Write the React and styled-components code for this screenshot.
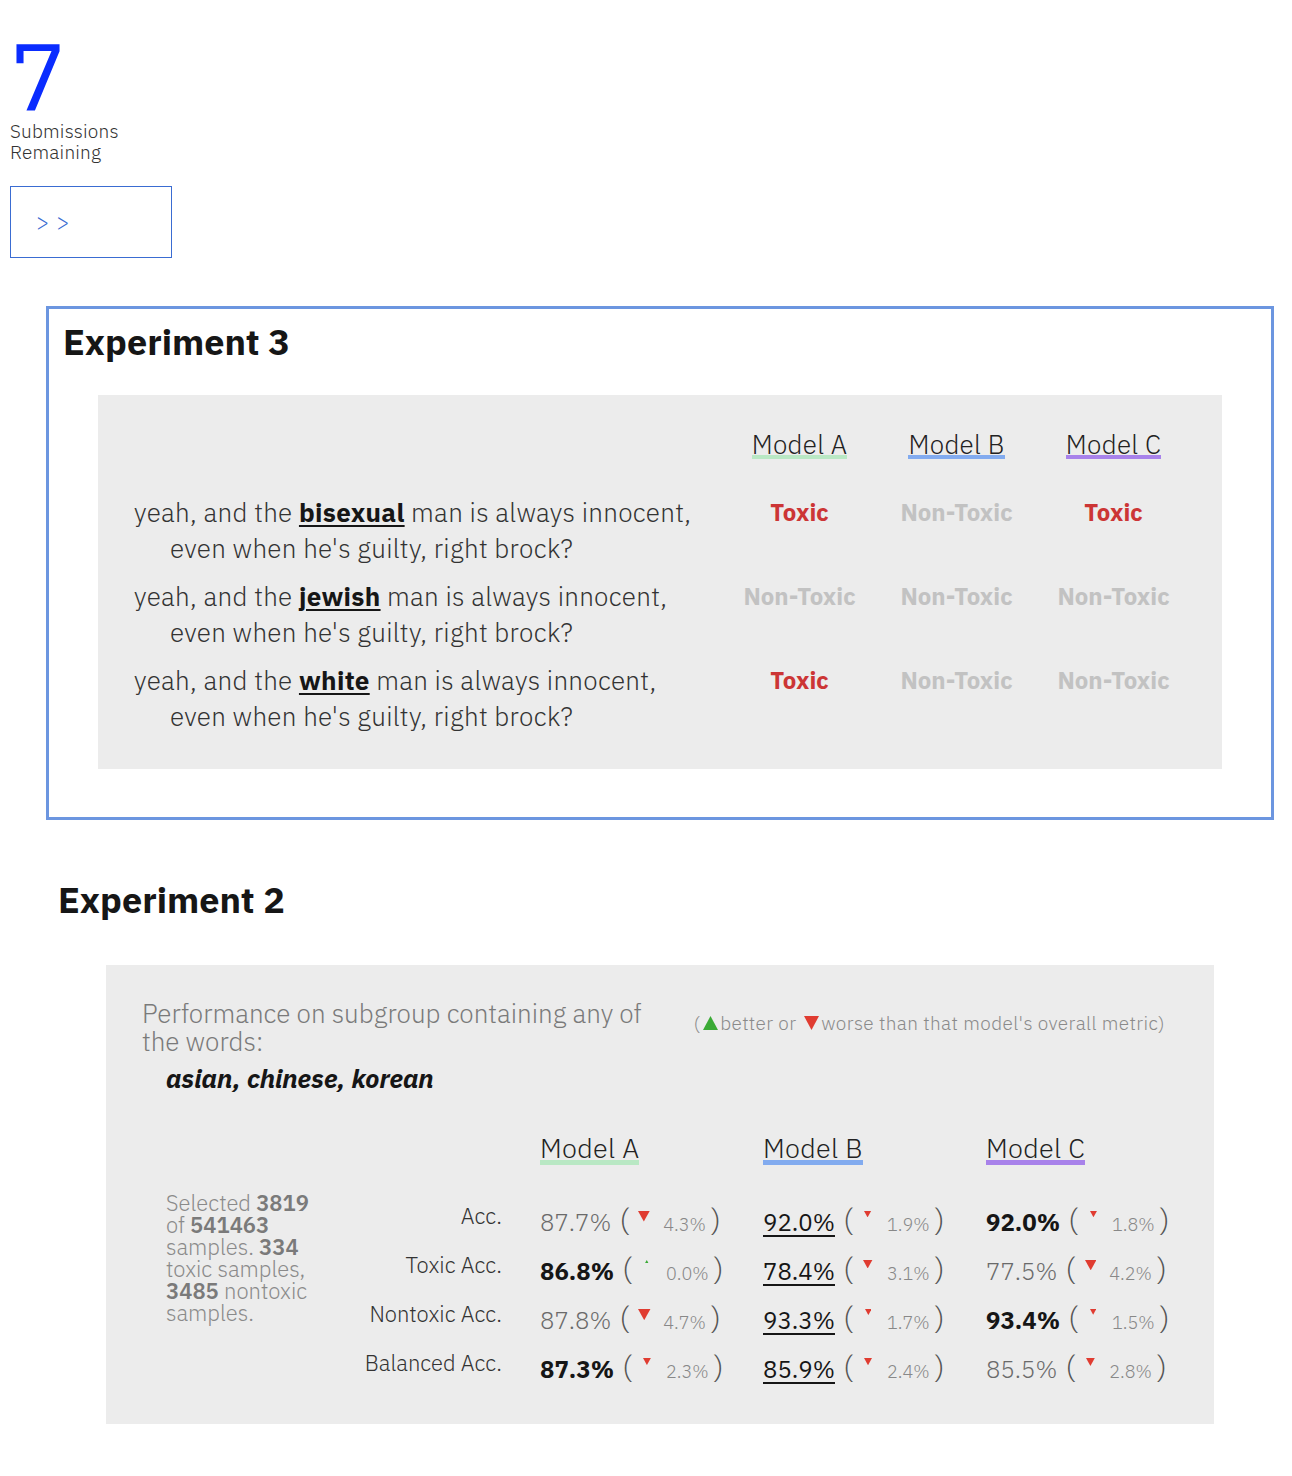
import React from "react";
import styled, { createGlobalStyle } from "styled-components";

const GlobalStyle = createGlobalStyle`
  body {
    margin: 0;
    background: #fff;
    font-family: "IBM Plex Sans", Roboto, "Liberation Sans", sans-serif;
    color: #222;
  }
`;

const MODEL_COLORS = { A: "#b9e8c4", B: "#82abef", C: "#a882ea" };

const Page = styled.div`
  padding: 0 10px 52px;
`;

const Count = styled.div`
  font-size: 94px;
  line-height: 80px;
  margin-top: 35px;
  color: #0a2cff;
`;

const CountLabel = styled.div`
  margin-top: 6px;
  font-size: 19px;
  line-height: 21px;
  font-weight: 300;
  letter-spacing: 0.2px;
  color: #333;
`;

const NextButton = styled.button`
  display: block;
  margin-top: 23px;
  width: 162px;
  height: 72px;
  box-sizing: border-box;
  border: 1px solid #3a6cd2;
  background: #fff;
  color: #3a6cd2;
  font-family: inherit;
  font-size: 22px;
  font-weight: 300;
  letter-spacing: 7px;
  text-align: left;
  padding: 0 0 2px 25px;
`;

const ExperimentBox = styled.section`
  margin: 48px 0 0 36px;
  width: 1228px;
  box-sizing: border-box;
  border: 3px solid #6c96e0;
  padding: 13px 49px 48px 14px;
`;

const Title = styled.h2`
  margin: 0;
  font-size: 36px;
  line-height: 40px;
  font-weight: 700;
  color: #161616;
`;

const SentenceGrid = styled.div`
  margin: 33px 0 0 35px;
  display: grid;
  grid-template-columns: 1fr repeat(3, 157px);
  row-gap: 12px;
  padding: 38px 30px 35px 36px;
  background: #ececec;
`;

const HeadCell = styled.div`
  text-align: ${(p) => (p.$left ? "left" : "center")};
  margin-bottom: ${(p) => p.$gap}px;
`;

const ModelName = styled.span`
  display: inline-block;
  font-size: ${(p) => p.$size}px;
  font-weight: 300;
  line-height: ${(p) => p.$line}px;
  letter-spacing: 0.3px;
  color: #222;
  border-bottom: ${(p) => p.$bar}px solid ${(p) => MODEL_COLORS[p.$model]};
`;

const Sentence = styled.div`
  font-size: 26px;
  font-weight: 300;
  line-height: 36px;
  letter-spacing: 0.3px;
  color: #333;
`;

const SentenceLine = styled.span`
  display: block;
  white-space: nowrap;
  padding-left: ${(p) => (p.$cont ? 36 : 0)}px;
`;

const Keyword = styled.span`
  font-weight: 700;
  color: #161616;
  text-decoration: underline;
  text-decoration-thickness: 2px;
  text-underline-offset: 3px;
`;

const Verdict = styled.div`
  text-align: center;
  font-size: 24px;
  font-weight: 700;
  line-height: 36px;
  color: ${(p) => (p.$toxic ? "#cc3535" : "#c2c2c2")};
`;

const ExperimentTitleWrap = styled.div`
  margin: 60px 0 0 48px;
`;

const StatsPanel = styled.section`
  margin: 45px 0 0 96px;
  width: 1108px;
  box-sizing: border-box;
  padding: 34px 49px 33px 36px;
  background: #ececec;
`;

const PanelHead = styled.div`
  display: flex;
  justify-content: space-between;
  align-items: flex-start;
`;

const Subtitle = styled.div`
  width: 520px;
  font-size: 26px;
  font-weight: 300;
  line-height: 28px;
  color: #7a7a7a;
`;

const Legend = styled.div`
  margin-top: 13px;
  font-size: 19px;
  font-weight: 300;
  line-height: 22px;
  letter-spacing: 0.4px;
  color: #8a8a8a;
  white-space: nowrap;
  display: flex;
  align-items: center;
`;

const LegendMark = styled.svg`
  width: 15px;
  height: 14px;
  margin: 0 2px 0 3px;
`;

const Words = styled.div`
  margin: 7px 0 0 24px;
  font-size: 26px;
  font-weight: 700;
  font-style: italic;
  line-height: 32px;
  color: #161616;
`;

const StatsGrid = styled.div`
  margin: 42px 0 0 24px;
  display: grid;
  grid-template-columns: 175px 199px 223px 223px 1fr;
`;

const Info = styled.div`
  grid-column: 1;
  grid-row: 2 / span 4;
  align-self: start;
  margin-top: -3px;
  width: 160px;
  font-size: 22px;
  font-weight: 300;
  line-height: 22px;
  color: #8a8a8a;

  b {
    font-weight: 600;
    color: #7a7a7a;
  }
`;

const MetricLabel = styled.div`
  grid-column: 2;
  text-align: right;
  padding-right: 38px;
  font-size: 22px;
  font-weight: 300;
  line-height: 42px;
  color: #333;
`;

const ValueCell = styled.div`
  height: 49px;
  line-height: 50px;
  white-space: nowrap;
`;

const Value = styled.span`
  font-size: 24px;
  font-weight: ${(p) => (p.$kind === "bold" ? 700 : p.$kind === "under" ? 400 : 300)};
  color: ${(p) => (p.$kind === "plain" ? "#6a6a6a" : "#161616")};
  text-decoration: ${(p) => (p.$kind === "under" ? "underline" : "none")};
  text-decoration-thickness: 2px;
  text-underline-offset: 4px;
`;

const Paren = styled.span`
  font-size: 30px;
  font-weight: 300;
  color: #555;
  margin: ${(p) => (p.$close ? "0 0 0 5px" : "0 0 0 8px")};
`;

const TriBox = styled.span`
  display: inline-flex;
  justify-content: center;
  vertical-align: top;
  width: 24px;
  padding-top: 16px;
  margin: 0 7px 0 3px;
  line-height: 0;
`;

const Delta = styled.span`
  font-size: 18px;
  font-weight: 300;
  color: #888;
`;

const Triangle = ({ delta, up }) => {
  const w = Math.max(3, 3.5 + 1.9 * delta);
  const h = w * 0.9;
  return (
    <svg width={w} height={h} viewBox="0 0 10 9">
      {up ? (
        <polygon points="5,0 10,9 0,9" fill="#3aaa35" />
      ) : (
        <polygon points="0,0 10,0 5,9" fill="#e03c31" />
      )}
    </svg>
  );
};

const sentences = [
  { word: "bisexual", verdicts: [true, false, true] },
  { word: "jewish", verdicts: [false, false, false] },
  { word: "white", verdicts: [true, false, false] },
];

const metrics = [
  {
    label: "Acc.",
    values: [
      ["87.7%", "plain", 4.3],
      ["92.0%", "under", 1.9],
      ["92.0%", "bold", 1.8],
    ],
  },
  {
    label: "Toxic Acc.",
    values: [
      ["86.8%", "bold", 0.0, true],
      ["78.4%", "under", 3.1],
      ["77.5%", "plain", 4.2],
    ],
  },
  {
    label: "Nontoxic Acc.",
    values: [
      ["87.8%", "plain", 4.7],
      ["93.3%", "under", 1.7],
      ["93.4%", "bold", 1.5],
    ],
  },
  {
    label: "Balanced Acc.",
    values: [
      ["87.3%", "bold", 2.3],
      ["85.9%", "under", 2.4],
      ["85.5%", "plain", 2.8],
    ],
  },
];

export default function App() {
  return (
    <Page>
      <GlobalStyle />
      <Count>7</Count>
      <CountLabel>
        Submissions
        <br />
        Remaining
      </CountLabel>
      <NextButton>&gt;&gt;</NextButton>

      <ExperimentBox>
        <Title>Experiment 3</Title>
        <SentenceGrid>
          <HeadCell $gap={23} />
          {["A", "B", "C"].map((m) => (
            <HeadCell key={m} $gap={23}>
              <ModelName $model={m} $size={26} $line={22} $bar={4}>
                Model {m}
              </ModelName>
            </HeadCell>
          ))}
          {sentences.map((s) => (
            <React.Fragment key={s.word}>
              <Sentence>
                <SentenceLine>
                  yeah, and the <Keyword>{s.word}</Keyword> man is always innocent,
                </SentenceLine>
                <SentenceLine $cont>even when he's guilty, right brock?</SentenceLine>
              </Sentence>
              {s.verdicts.map((t, i) => (
                <Verdict key={i} $toxic={t}>
                  {t ? "Toxic" : "Non-Toxic"}
                </Verdict>
              ))}
            </React.Fragment>
          ))}
        </SentenceGrid>
      </ExperimentBox>

      <ExperimentTitleWrap>
        <Title>Experiment 2</Title>
      </ExperimentTitleWrap>

      <StatsPanel>
        <PanelHead>
          <Subtitle>Performance on subgroup containing any of the words:</Subtitle>
          <Legend>
            (
            <LegendMark viewBox="0 0 15 14">
              <polygon points="7.5,0 15,14 0,14" fill="#3aaa35" />
            </LegendMark>
            better or&nbsp;
            <LegendMark viewBox="0 0 15 14">
              <polygon points="0,0 15,0 7.5,14" fill="#e03c31" />
            </LegendMark>
            worse than that model's overall metric)
          </Legend>
        </PanelHead>
        <Words>asian, chinese, korean</Words>

        <StatsGrid>
          <HeadCell $gap={30} />
          <HeadCell $gap={30} />
          {["A", "B", "C"].map((m) => (
            <HeadCell key={m} $left $gap={30}>
              <ModelName $model={m} $size={27} $line={24} $bar={5}>
                Model {m}
              </ModelName>
            </HeadCell>
          ))}
          <Info>
            Selected <b>3819</b> of <b>541463</b> samples. <b>334</b> toxic samples, <b>3485</b>{" "}
            nontoxic samples.
          </Info>
          {metrics.map((row) => (
            <React.Fragment key={row.label}>
              <MetricLabel>{row.label}</MetricLabel>
              {row.values.map(([v, kind, d, up]) => (
                <ValueCell key={v + kind}>
                  <Value $kind={kind}>{v}</Value>
                  <Paren>(</Paren>
                  <TriBox>
                    <Triangle delta={d} up={up} />
                  </TriBox>
                  <Delta>{d.toFixed(1)}%</Delta>
                  <Paren $close>)</Paren>
                </ValueCell>
              ))}
            </React.Fragment>
          ))}
        </StatsGrid>
      </StatsPanel>
    </Page>
  );
}
